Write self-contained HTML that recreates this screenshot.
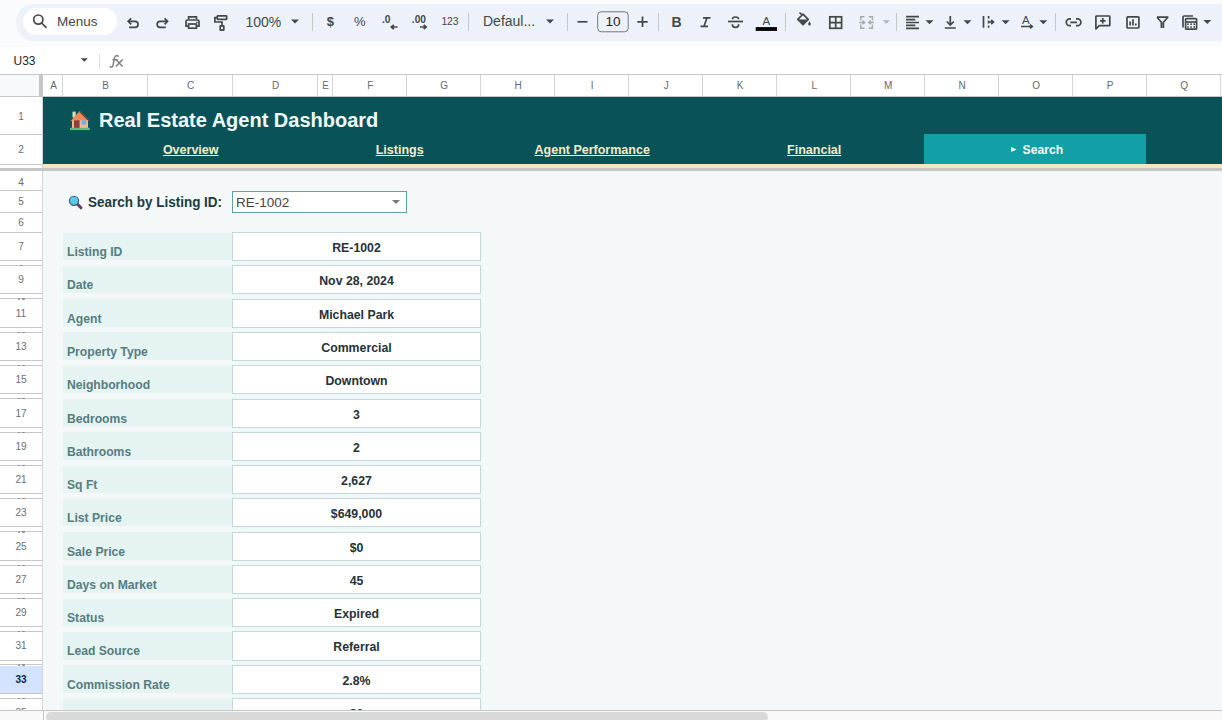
<!DOCTYPE html><html><head><meta charset="utf-8"><style>
*{margin:0;padding:0;box-sizing:border-box}
html,body{width:1222px;height:720px;overflow:hidden;background:#f9fbfd;font-family:"Liberation Sans",sans-serif}
body{position:relative}
.a{position:absolute}
.sep{position:absolute;top:13px;width:1px;height:18px;background:#c7c7c7}
.tt{position:absolute;color:#444746;white-space:nowrap}
.dd{position:absolute;width:0;height:0;border-left:4px solid transparent;border-right:4px solid transparent;border-top:4px solid #444746}
.ch{position:absolute;top:75.3px;height:21px;color:#65696c;font-size:10px;line-height:21px;text-align:center}
.vl{position:absolute;width:1px;background:#d3d5d4}
.hl{position:absolute;height:1px;background:#c4c7c5}
.rn{position:absolute;left:0;width:42px;color:#6a6e71;font-size:10px;text-align:center;overflow:hidden}
.lab{position:absolute;left:63px;width:169px;background:#e5f3f3;color:#557d80;font-weight:bold;font-size:12.8px}
.lab span{position:absolute;left:4px;top:0;line-height:14px;transform-origin:0 0;transform:scaleX(0.95)}
.val{position:absolute;left:232px;width:249px;background:#fff;border:1px solid #c5d7d8;color:#263238;font-weight:bold;font-size:12.3px;text-align:center}
.lnk{position:absolute;top:142px;color:#f3ecc8;font-weight:bold;font-size:12.5px;text-decoration:underline;text-align:center;line-height:16px}
</style></head><body>
<div class="a" style="left:16px;top:4px;width:1230px;height:36.5px;background:#edf2fa;border-radius:18px"></div>
<div class="a" style="left:23px;top:8px;width:94px;height:27px;background:#fff;border-radius:14px"></div>
<div class="tt" style="left:57px;top:14px;font-size:13.5px;line-height:16px">Menus</div>
<div class="tt" style="left:245.5px;top:14px;font-size:14px;line-height:16px">100%</div>
<div class="tt" style="left:483px;top:13px;font-size:14px;line-height:16px">Defaul...</div>
<div class="sep" style="left:312.0px"></div>
<div class="sep" style="left:468.0px"></div>
<div class="sep" style="left:567.0px"></div>
<div class="sep" style="left:658.0px"></div>
<div class="sep" style="left:785.0px"></div>
<div class="sep" style="left:896.0px"></div>
<div class="sep" style="left:1055.0px"></div>
<div class="a" style="left:0;top:46.5px;width:1222px;height:28px;background:#fff"></div>
<div class="tt" style="left:13.5px;top:54px;font-size:12px;line-height:15px;color:#1f1f1f">U33</div>
<div class="a" style="left:99px;top:54px;width:1px;height:15px;background:#dadce0"></div>
<svg class="a" style="left:0;top:0" width="1222" height="74" viewBox="0 0 1222 74"><circle cx="38.3" cy="19.6" r="4.6" fill="none" stroke="#444746" stroke-width="1.7"/>
<path d="M41.6 23 L46 27.4" fill="none" stroke="#444746" stroke-width="1.7" stroke-linecap="round"/>
<path d="M128.6 21.3 H135 A3.05 3.05 0 0 1 135 27.4 H129.1" fill="none" stroke="#444746" stroke-width="1.7" stroke-width="1.55"/>
<path d="M131.2 18.3 L128.2 21.3 L131.2 24.3" fill="none" stroke="#444746" stroke-width="1.7" stroke-width="1.55"/>
<path d="M167 21.3 H160.2 A3.05 3.05 0 0 0 160.2 27.4 H165.8" fill="none" stroke="#444746" stroke-width="1.7" stroke-width="1.55"/>
<path d="M164.6 18.3 L167.6 21.3 L164.6 24.3" fill="none" stroke="#444746" stroke-width="1.7" stroke-width="1.55"/>
<path d="M188.6 19.3 V16.8 H196.4 V19.3" fill="none" stroke="#444746" stroke-width="1.7"/>
<path d="M188.4 26.2 H186 V21.5 Q186 20 187.5 20 H197.5 Q199 20 199 21.5 V26.2 H196.6" fill="none" stroke="#444746" stroke-width="1.7"/>
<rect x="188.6" y="24" width="7.8" height="4.2" fill="none" stroke="#444746" stroke-width="1.7"/>
<circle cx="197" cy="22.3" r="0.8" fill="#444746"/>
<rect x="217.3" y="15.8" width="9.4" height="3.6" rx="0.6" fill="none" stroke="#444746" stroke-width="1.7"/>
<path d="M217.3 17.6 H214.9 V22 H222 V25.8" fill="none" stroke="#444746" stroke-width="1.7"/>
<rect x="220.2" y="25.8" width="3.6" height="4.4" rx="0.5" fill="none" stroke="#444746" stroke-width="1.7"/>
<path d="M291.0 19.5h8l-4.0 4.0z" fill="#444746"/>
<text x="330.3" y="25.5" font-family="Liberation Sans" font-weight="bold" font-size="13" fill="#444746" text-anchor="middle">$</text>
<text x="359.7" y="25.5" font-family="Liberation Sans" font-size="13" fill="#444746" text-anchor="middle">%</text>
<text x="382" y="22.8" font-family="Liberation Sans" font-weight="bold" font-size="10.2" fill="#444746">.0</text>
<path d="M397.5 27 H391.5 M393.8 24.8 L391.3 27 L393.8 29.2" fill="none" stroke="#444746" stroke-width="1.7" stroke-width="1.6"/>
<text x="411.8" y="22.8" font-family="Liberation Sans" font-weight="bold" font-size="10.2" fill="#444746">.00</text>
<path d="M420 27 H426 M423.7 24.8 L426.2 27 L423.7 29.2" fill="none" stroke="#444746" stroke-width="1.7" stroke-width="1.6"/>
<text x="441.4" y="24.6" font-family="Liberation Sans" font-size="10.3" fill="#444746">123</text>
<path d="M546.0 19.5h8l-4.0 4.0z" fill="#444746"/>
<path d="M577.5 21.8 H587.5" fill="none" stroke="#444746" stroke-width="1.7"/>
<rect x="597.7" y="11.8" width="30.5" height="20" rx="3.5" fill="none" stroke="#747775" stroke-width="1"/>
<text x="613" y="26.4" font-family="Liberation Sans" font-size="13.5" fill="#1f1f1f" text-anchor="middle">10</text>
<path d="M637.3 21.8 H647.7 M642.5 16.6 V27" fill="none" stroke="#444746" stroke-width="1.7"/>
<text x="676.5" y="27.1" font-family="Liberation Sans" font-weight="bold" font-size="14" fill="#444746" text-anchor="middle">B</text>
<path d="M703 17.8 H710.5 M700.5 26.3 H708 M707 17.8 L704 26.3" fill="none" stroke="#444746" stroke-width="1.7" stroke-width="1.9"/>
<path d="M728 21.5 H743" fill="none" stroke="#444746" stroke-width="1.7" stroke-width="1.5"/>
<path d="M738.5 19.3 Q738.5 17 735.5 17 Q732.5 17 732.5 19.3 M732.3 24.2 Q732.3 27.3 735.5 27.3 Q738.7 27.3 738.7 24.2" fill="none" stroke="#444746" stroke-width="1.7" stroke-width="1.6"/>
<text x="766.3" y="24.5" font-family="Liberation Sans" font-size="11.5" fill="#444746" text-anchor="middle">A</text>
<rect x="755.7" y="27.1" width="21.3" height="3.8" fill="#000"/>
<path d="M799.5 12.5 L802 15 M797.8 19.3 L803 14.2 L808.2 19.4 L803 24.6 Z" fill="none" stroke="#444746" stroke-width="1.7" stroke-linejoin="round"/>
<path d="M798.6 19.6 H807.4 L803 24 Z" fill="#444746"/>
<path d="M809.5 21.4 Q811.2 23.4 810.8 24.2 A1.3 1.3 0 0 1 808.2 24.2 Q807.8 23.4 809.5 21.4Z" fill="#444746"/>
<rect x="829.8" y="16.8" width="11.8" height="11.5" fill="none" stroke="#444746" stroke-width="1.7" stroke-width="1.5"/>
<path d="M835.7 16.8 V28.3 M829.8 22.55 H841.6" fill="none" stroke="#444746" stroke-width="1.7" stroke-width="1.5"/>
<path d="M864.5 16.8 H860.8 V20.3 M864.5 28.2 H860.8 V24.6 M868.7 16.8 H872.4 V20.3 M868.7 28.2 H872.4 V24.6 M859.3 22.4 H864.4 M862.6 20.5 L864.6 22.4 L862.6 24.3 M874 22.4 H868.9 M870.7 20.5 L868.7 22.4 L870.7 24.3" fill="none" stroke="#a8abaa" stroke-width="1.5"/>
<path d="M882.8 20.25h7l-3.5 3.5z" fill="#b0b3b2"/>
<path d="M906 16.6 H919 M906 19.6 H915.3 M906 22.5 H919 M906 25.4 H915.3 M906 28.3 H919" fill="none" stroke="#444746" stroke-width="1.7" stroke-width="1.5"/>
<path d="M925.5 20.2h8l-4.0 4.0z" fill="#444746"/>
<path d="M950.3 16 V25 M946.8 21.5 L950.3 25 L953.8 21.5 M944.8 28 H955.8" fill="none" stroke="#444746" stroke-width="1.7" stroke-width="1.7"/>
<path d="M963.5 20.2h8l-4.0 4.0z" fill="#444746"/>
<path d="M983.5 16 V27.8 M988.6 16 V18.5 M988.6 20.5 V23.5 M988.6 25.5 V27.8 M988.6 22 H993.2 M991.2 19.9 L993.5 22 L991.2 24.1" fill="none" stroke="#444746" stroke-width="1.7" stroke-width="1.7"/>
<path d="M1001.6 20.2h8l-4.0 4.0z" fill="#444746"/>
<text x="1025.8" y="24.2" font-family="Liberation Sans" font-size="11.5" fill="#444746" text-anchor="middle">A</text>
<path d="M1021 26.5 H1032 M1030 24.6 L1032.3 26.5 L1030 28.4" fill="none" stroke="#444746" stroke-width="1.7" stroke-width="1.5"/>
<path d="M1039.3 20.2h8l-4.0 4.0z" fill="#444746"/>
<path d="M1071 18.9 H1069.7 A3.4 3.4 0 0 0 1069.7 25.7 H1071 M1076 18.9 H1077.5 A3.4 3.4 0 0 1 1077.5 25.7 H1076 M1070.3 22.3 H1077" fill="none" stroke="#444746" stroke-width="1.7" stroke-width="1.8"/>
<path d="M1095.9 29 V16.5 Q1095.9 16 1096.5 16 H1109.3 Q1109.8 16 1109.8 16.5 V25.2 Q1109.8 25.7 1109.3 25.7 H1099.2 Z" fill="none" stroke="#444746" stroke-width="1.7" stroke-width="1.7" stroke-linejoin="round"/>
<path d="M1102.8 18 V23.6 M1100 20.8 H1105.6" fill="none" stroke="#444746" stroke-width="1.7" stroke-width="1.7"/>
<rect x="1127" y="16.8" width="11.9" height="11.2" rx="0.8" fill="none" stroke="#444746" stroke-width="1.7" stroke-width="1.6"/>
<path d="M1130.2 21.5 V25.6 M1133 19.2 V25.6 M1135.8 23.4 V25.6" fill="none" stroke="#444746" stroke-width="1.7" stroke-width="1.5"/>
<path d="M1157 17.2 H1167.8 L1163.4 22.3 V27.9 M1157 17.2 L1161.4 22.3 V27.9" fill="none" stroke="#444746" stroke-width="1.7" stroke-width="1.7" stroke-linejoin="round"/>
<path d="M1183 27.6 V17 Q1183 16 1184 16 H1193" fill="none" stroke="#444746" stroke-width="1.7" stroke-width="1.6"/>
<rect x="1185.6" y="18.6" width="11" height="10.6" rx="1" fill="none" stroke="#444746" stroke-width="1.7" stroke-width="1.6"/>
<path d="M1185.6 22 H1196.6" fill="none" stroke="#444746" stroke-width="1.7" stroke-width="1.6"/>
<rect x="1187.2" y="23.4" width="1.6" height="1.6" fill="#444746"/>
<rect x="1190.3" y="23.4" width="1.6" height="1.6" fill="#444746"/>
<rect x="1193.4" y="23.4" width="1.6" height="1.6" fill="#444746"/>
<rect x="1187.2" y="26.2" width="1.6" height="1.6" fill="#444746"/>
<rect x="1190.3" y="26.2" width="1.6" height="1.6" fill="#444746"/>
<rect x="1193.4" y="26.2" width="1.6" height="1.6" fill="#444746"/>
<path d="M1203.3 20.0h8l-4.0 4.0z" fill="#444746"/>
<path d="M118.2 56.3 Q117 55 115.6 56 Q114.6 56.8 114.3 58.5 L113.1 65.2 Q112.7 67.3 111 67.2 Q110.4 67.1 110.2 66.6" fill="none" stroke="#7b7e80" stroke-width="1.45" stroke-linecap="round"/>
<path d="M112.3 59.6 H117.6" fill="none" stroke="#7b7e80" stroke-width="1.3"/>
<path d="M115.9 59.4 L122.6 66.4 M122.6 59.4 L115.9 66.4" fill="none" stroke="#7b7e80" stroke-width="1.5"/>
<path d="M80.8 58.25h7l-3.5 3.5z" fill="#444746"/></svg>
<div class="a" style="left:0;top:74px;width:1222px;height:23px;background:#fff"></div>
<div class="a" style="left:0;top:75px;width:39px;height:21px;background:#f8f9fa"></div>
<div class="hl" style="left:0;top:74px;width:1222px"></div>
<div class="hl" style="left:0;top:96px;width:1222px"></div>
<div class="a" style="left:39px;top:75px;width:4px;height:22px;background:#c4c7c5"></div>
<div class="ch" style="left:44.2px;width:19px">A</div>
<div class="vl" style="left:62px;top:75px;height:21px"></div>
<div class="ch" style="left:63.2px;width:85px">B</div>
<div class="vl" style="left:147px;top:75px;height:21px"></div>
<div class="ch" style="left:148.2px;width:85px">C</div>
<div class="vl" style="left:232px;top:75px;height:21px"></div>
<div class="ch" style="left:233.2px;width:85px">D</div>
<div class="vl" style="left:317px;top:75px;height:21px"></div>
<div class="ch" style="left:318.2px;width:15px">E</div>
<div class="vl" style="left:332px;top:75px;height:21px"></div>
<div class="ch" style="left:333.2px;width:74px">F</div>
<div class="vl" style="left:406px;top:75px;height:21px"></div>
<div class="ch" style="left:407.2px;width:74px">G</div>
<div class="vl" style="left:480px;top:75px;height:21px"></div>
<div class="ch" style="left:481.2px;width:74px">H</div>
<div class="vl" style="left:554px;top:75px;height:21px"></div>
<div class="ch" style="left:555.2px;width:74px">I</div>
<div class="vl" style="left:628px;top:75px;height:21px"></div>
<div class="ch" style="left:629.2px;width:74px">J</div>
<div class="vl" style="left:702px;top:75px;height:21px"></div>
<div class="ch" style="left:703.2px;width:74px">K</div>
<div class="vl" style="left:776px;top:75px;height:21px"></div>
<div class="ch" style="left:777.2px;width:74px">L</div>
<div class="vl" style="left:850px;top:75px;height:21px"></div>
<div class="ch" style="left:851.2px;width:74px">M</div>
<div class="vl" style="left:924px;top:75px;height:21px"></div>
<div class="ch" style="left:925.2px;width:74px">N</div>
<div class="vl" style="left:998px;top:75px;height:21px"></div>
<div class="ch" style="left:999.2px;width:74px">O</div>
<div class="vl" style="left:1072px;top:75px;height:21px"></div>
<div class="ch" style="left:1073.2px;width:74px">P</div>
<div class="vl" style="left:1146px;top:75px;height:21px"></div>
<div class="ch" style="left:1147.2px;width:74px">Q</div>
<div class="vl" style="left:1220px;top:75px;height:21px"></div>
<div class="a" style="left:0;top:97px;width:43px;height:613px;background:#fff"></div>
<div class="vl" style="left:42px;top:97px;height:613px"></div>
<div class="hl" style="left:0;top:164px;width:42px"></div>
<div class="rn" style="top:99px;height:36.599999999999994px;line-height:36.599999999999994px;">1</div>
<div class="hl" style="left:0;top:133.6px;width:42px"></div>
<div class="rn" style="top:134.6px;height:29.400000000000006px;line-height:29.400000000000006px;">2</div>
<div class="hl" style="left:0;top:164px;width:42px"></div>
<div class="rn" style="top:172.5px;height:19.19999999999999px;line-height:19.19999999999999px;">4</div>
<div class="hl" style="left:0;top:190.2px;width:42px"></div>
<div class="rn" style="top:191.7px;height:20.900000000000006px;line-height:20.900000000000006px;">5</div>
<div class="hl" style="left:0;top:212.1px;width:42px"></div>
<div class="rn" style="top:213.1px;height:19.0px;line-height:19.0px;">6</div>
<div class="hl" style="left:0;top:232.1px;width:42px"></div>
<div class="rn" style="top:233.1px;height:27.099999999999994px;line-height:27.099999999999994px;">7</div>
<div class="hl" style="left:0;top:260.2px;width:42px"></div>
<div class="hl" style="left:0;top:265.1px;width:42px"></div>
<div class="a" style="left:20px;top:265.1px;width:2.6px;height:1.2px;background:#8a8d8f;border-radius:1px"></div>
<div class="rn" style="top:266.38px;height:27.100000000000023px;line-height:27.100000000000023px;">9</div>
<div class="hl" style="left:0;top:293.48px;width:42px"></div>
<div class="hl" style="left:0;top:298.38px;width:42px"></div>
<div class="a" style="left:17.5px;top:298.38px;width:2.6px;height:1.2px;background:#8a8d8f;border-radius:1px"></div>
<div class="a" style="left:22px;top:298.38px;width:2.6px;height:1.2px;background:#8a8d8f;border-radius:1px"></div>
<div class="rn" style="top:299.65999999999997px;height:27.100000000000023px;line-height:27.100000000000023px;">11</div>
<div class="hl" style="left:0;top:326.76px;width:42px"></div>
<div class="hl" style="left:0;top:331.66px;width:42px"></div>
<div class="a" style="left:17.5px;top:331.66px;width:2.6px;height:1.2px;background:#8a8d8f;border-radius:1px"></div>
<div class="a" style="left:22px;top:331.66px;width:2.6px;height:1.2px;background:#8a8d8f;border-radius:1px"></div>
<div class="rn" style="top:332.94px;height:27.099999999999966px;line-height:27.099999999999966px;">13</div>
<div class="hl" style="left:0;top:360.03999999999996px;width:42px"></div>
<div class="hl" style="left:0;top:364.94000000000005px;width:42px"></div>
<div class="a" style="left:17.5px;top:364.94000000000005px;width:2.6px;height:1.2px;background:#8a8d8f;border-radius:1px"></div>
<div class="a" style="left:22px;top:364.94000000000005px;width:2.6px;height:1.2px;background:#8a8d8f;border-radius:1px"></div>
<div class="rn" style="top:366.22px;height:27.099999999999966px;line-height:27.099999999999966px;">15</div>
<div class="hl" style="left:0;top:393.32px;width:42px"></div>
<div class="hl" style="left:0;top:398.22px;width:42px"></div>
<div class="a" style="left:17.5px;top:398.22px;width:2.6px;height:1.2px;background:#8a8d8f;border-radius:1px"></div>
<div class="a" style="left:22px;top:398.22px;width:2.6px;height:1.2px;background:#8a8d8f;border-radius:1px"></div>
<div class="rn" style="top:399.5px;height:27.100000000000023px;line-height:27.100000000000023px;">17</div>
<div class="hl" style="left:0;top:426.6px;width:42px"></div>
<div class="hl" style="left:0;top:431.5px;width:42px"></div>
<div class="a" style="left:17.5px;top:431.5px;width:2.6px;height:1.2px;background:#8a8d8f;border-radius:1px"></div>
<div class="a" style="left:22px;top:431.5px;width:2.6px;height:1.2px;background:#8a8d8f;border-radius:1px"></div>
<div class="rn" style="top:432.78px;height:27.100000000000023px;line-height:27.100000000000023px;">19</div>
<div class="hl" style="left:0;top:459.88px;width:42px"></div>
<div class="hl" style="left:0;top:464.78000000000003px;width:42px"></div>
<div class="a" style="left:17.5px;top:464.78000000000003px;width:2.6px;height:1.2px;background:#8a8d8f;border-radius:1px"></div>
<div class="a" style="left:22px;top:464.78000000000003px;width:2.6px;height:1.2px;background:#8a8d8f;border-radius:1px"></div>
<div class="rn" style="top:466.06px;height:27.099999999999966px;line-height:27.099999999999966px;">21</div>
<div class="hl" style="left:0;top:493.15999999999997px;width:42px"></div>
<div class="hl" style="left:0;top:498.06000000000006px;width:42px"></div>
<div class="a" style="left:17.5px;top:498.06000000000006px;width:2.6px;height:1.2px;background:#8a8d8f;border-radius:1px"></div>
<div class="a" style="left:22px;top:498.06000000000006px;width:2.6px;height:1.2px;background:#8a8d8f;border-radius:1px"></div>
<div class="rn" style="top:499.34000000000003px;height:27.100000000000023px;line-height:27.100000000000023px;">23</div>
<div class="hl" style="left:0;top:526.44px;width:42px"></div>
<div class="hl" style="left:0;top:531.34px;width:42px"></div>
<div class="a" style="left:17.5px;top:531.34px;width:2.6px;height:1.2px;background:#8a8d8f;border-radius:1px"></div>
<div class="a" style="left:22px;top:531.34px;width:2.6px;height:1.2px;background:#8a8d8f;border-radius:1px"></div>
<div class="rn" style="top:532.62px;height:27.100000000000023px;line-height:27.100000000000023px;">25</div>
<div class="hl" style="left:0;top:559.72px;width:42px"></div>
<div class="hl" style="left:0;top:564.62px;width:42px"></div>
<div class="a" style="left:17.5px;top:564.62px;width:2.6px;height:1.2px;background:#8a8d8f;border-radius:1px"></div>
<div class="a" style="left:22px;top:564.62px;width:2.6px;height:1.2px;background:#8a8d8f;border-radius:1px"></div>
<div class="rn" style="top:565.9px;height:27.100000000000023px;line-height:27.100000000000023px;">27</div>
<div class="hl" style="left:0;top:593.0px;width:42px"></div>
<div class="hl" style="left:0;top:597.9000000000001px;width:42px"></div>
<div class="a" style="left:17.5px;top:597.9000000000001px;width:2.6px;height:1.2px;background:#8a8d8f;border-radius:1px"></div>
<div class="a" style="left:22px;top:597.9000000000001px;width:2.6px;height:1.2px;background:#8a8d8f;border-radius:1px"></div>
<div class="rn" style="top:599.1800000000001px;height:27.09999999999991px;line-height:27.09999999999991px;">29</div>
<div class="hl" style="left:0;top:626.28px;width:42px"></div>
<div class="hl" style="left:0;top:631.1800000000001px;width:42px"></div>
<div class="a" style="left:17.5px;top:631.1800000000001px;width:2.6px;height:1.2px;background:#8a8d8f;border-radius:1px"></div>
<div class="a" style="left:22px;top:631.1800000000001px;width:2.6px;height:1.2px;background:#8a8d8f;border-radius:1px"></div>
<div class="rn" style="top:632.46px;height:27.09999999999991px;line-height:27.09999999999991px;">31</div>
<div class="hl" style="left:0;top:659.56px;width:42px"></div>
<div class="hl" style="left:0;top:664.46px;width:42px"></div>
<div class="a" style="left:17.5px;top:664.46px;width:2.6px;height:1.2px;background:#8a8d8f;border-radius:1px"></div>
<div class="a" style="left:22px;top:664.46px;width:2.6px;height:1.2px;background:#8a8d8f;border-radius:1px"></div>
<div class="a" style="left:0;top:665.74px;width:42px;height:27.09999999999991px;background:#d3e3fd"></div>
<div class="rn" style="top:665.74px;height:27.09999999999991px;line-height:27.09999999999991px;color:#0b1f4d;font-weight:bold;">33</div>
<div class="hl" style="left:0;top:692.8399999999999px;width:42px"></div>
<div class="hl" style="left:0;top:697.74px;width:42px"></div>
<div class="a" style="left:17.5px;top:697.74px;width:2.6px;height:1.2px;background:#8a8d8f;border-radius:1px"></div>
<div class="a" style="left:22px;top:697.74px;width:2.6px;height:1.2px;background:#8a8d8f;border-radius:1px"></div>
<div class="rn" style="top:699px;height:28px;line-height:28px">35</div>
<div class="a" style="left:43px;top:97px;width:1179px;height:613px;background:#f4f8f9"></div>
<div class="a" style="left:43px;top:97px;width:1179px;height:67px;background:#095258"></div>
<div class="a" style="left:43px;top:164px;width:1179px;height:4px;background:#f1e6c6"></div>
<div class="a" style="left:0;top:167.6px;width:1222px;height:3.8px;background:#c8c6c4"></div>
<div class="a" style="left:924px;top:134px;width:222px;height:30px;background:#12a0a6"></div>
<svg class="a" style="left:0;top:0" width="100" height="140" viewBox="0 0 100 140"><rect x="72.5" y="111.6" width="3.2" height="6" fill="#cfe3c0"/><path d="M70.6 121 L79.7 111 L89.6 121 Z" fill="#ef8a5c"/><path d="M79.7 111 L89.6 121 L88.2 121 L79.7 112.6 Z" fill="#7a3d30"/><rect x="72" y="120.5" width="16" height="7.6" fill="#f2b696"/><rect x="74" y="120.3" width="5.6" height="7.8" fill="#8e3f3a"/><rect x="81.7" y="120.3" width="4.4" height="4.2" fill="#6aaee0"/><rect x="70" y="127.8" width="19.8" height="2.3" fill="#5fba7d"/></svg>
<div class="tt" style="left:99px;top:108px;font-size:20px;line-height:24px;color:#f0fbfa;font-weight:bold">Real Estate Agent Dashboard</div>
<div class="lnk" style="left:63.2px;width:255px">Overview</div>
<div class="lnk" style="left:318.2px;width:163px">Listings</div>
<div class="lnk" style="left:481.2px;width:222px">Agent Performance</div>
<div class="lnk" style="left:703.2px;width:222px">Financial</div>
<svg class="a" style="left:1005px;top:140px" width="20" height="20" viewBox="1005 140 20 20"><path d="M1011 147 L1016.6 149.5 L1011 152 Z" fill="#e8fafa"/></svg>
<div class="tt" style="left:1022.5px;top:141.5px;font-size:12.2px;line-height:16px;color:#f2fcfc;font-weight:bold">Search</div>
<svg class="a" style="left:60px;top:190px" width="30" height="22" viewBox="60 190 30 22"><path d="M77.6 204.4 L81 207.8" stroke="#6d3b6e" stroke-width="3" stroke-linecap="round"/><circle cx="74" cy="200.8" r="4.6" fill="#5cc6ec" stroke="#2d5e6c" stroke-width="1.1"/></svg>
<div class="tt" style="left:88px;top:194px;font-size:14px;line-height:16px;color:#1f3a3d;font-weight:bold;transform-origin:0 0;transform:scaleX(0.963)">Search by Listing ID:</div>
<div class="a" style="left:232px;top:191px;width:175px;height:22px;background:#fff;border:1px solid #5fa3a8"></div>
<div class="tt" style="left:236px;top:195px;font-size:13.5px;line-height:15px;color:#444">RE-1002</div>
<div class="dd" style="left:392px;top:200px;border-top-color:#777;border-left-width:4px;border-right-width:4px"></div>
<div class="a" style="left:232px;top:233px;width:251px;height:477px;background:#eef8f9"></div>
<div class="lab" style="top:232.6px;height:27.6px"><span style="top:12.5px">Listing ID</span></div>
<div class="val" style="top:232.1px;height:29.1px;line-height:27.1px"><span style="position:relative;top:2px">RE-1002</span></div>
<div class="lab" style="top:265.88px;height:27.6px"><span style="top:12.5px">Date</span></div>
<div class="val" style="top:265.38px;height:29.1px;line-height:27.1px"><span style="position:relative;top:2px">Nov 28, 2024</span></div>
<div class="lab" style="top:299.15999999999997px;height:27.6px"><span style="top:12.5px">Agent</span></div>
<div class="val" style="top:298.65999999999997px;height:29.1px;line-height:27.1px"><span style="position:relative;top:2px">Michael Park</span></div>
<div class="lab" style="top:332.44px;height:27.6px"><span style="top:12.5px">Property Type</span></div>
<div class="val" style="top:331.94px;height:29.1px;line-height:27.1px"><span style="position:relative;top:2px">Commercial</span></div>
<div class="lab" style="top:365.72px;height:27.6px"><span style="top:12.5px">Neighborhood</span></div>
<div class="val" style="top:365.22px;height:29.1px;line-height:27.1px"><span style="position:relative;top:2px">Downtown</span></div>
<div class="lab" style="top:399.0px;height:27.6px"><span style="top:12.5px">Bedrooms</span></div>
<div class="val" style="top:398.5px;height:29.1px;line-height:27.1px"><span style="position:relative;top:2px">3</span></div>
<div class="lab" style="top:432.28px;height:27.6px"><span style="top:12.5px">Bathrooms</span></div>
<div class="val" style="top:431.78px;height:29.1px;line-height:27.1px"><span style="position:relative;top:2px">2</span></div>
<div class="lab" style="top:465.56px;height:27.6px"><span style="top:12.5px">Sq Ft</span></div>
<div class="val" style="top:465.06px;height:29.1px;line-height:27.1px"><span style="position:relative;top:2px">2,627</span></div>
<div class="lab" style="top:498.84000000000003px;height:27.6px"><span style="top:12.5px">List Price</span></div>
<div class="val" style="top:498.34000000000003px;height:29.1px;line-height:27.1px"><span style="position:relative;top:2px">$649,000</span></div>
<div class="lab" style="top:532.12px;height:27.6px"><span style="top:12.5px">Sale Price</span></div>
<div class="val" style="top:531.62px;height:29.1px;line-height:27.1px"><span style="position:relative;top:2px">$0</span></div>
<div class="lab" style="top:565.4px;height:27.6px"><span style="top:12.5px">Days on Market</span></div>
<div class="val" style="top:564.9px;height:29.1px;line-height:27.1px"><span style="position:relative;top:2px">45</span></div>
<div class="lab" style="top:598.6800000000001px;height:27.6px"><span style="top:12.5px">Status</span></div>
<div class="val" style="top:598.1800000000001px;height:29.1px;line-height:27.1px"><span style="position:relative;top:2px">Expired</span></div>
<div class="lab" style="top:631.96px;height:27.6px"><span style="top:12.5px">Lead Source</span></div>
<div class="val" style="top:631.46px;height:29.1px;line-height:27.1px"><span style="position:relative;top:2px">Referral</span></div>
<div class="lab" style="top:665.24px;height:27.6px"><span style="top:12.5px">Commission Rate</span></div>
<div class="val" style="top:664.74px;height:29.1px;line-height:27.1px"><span style="position:relative;top:2px">2.8%</span></div>
<div class="lab" style="top:698.52px;height:27.6px"><span style="top:12.5px">Commission</span></div>
<div class="val" style="top:698.02px;height:29.1px;line-height:27.1px"><span style="position:relative;top:2px">$0</span></div>
<div class="a" style="left:0;top:710px;width:1222px;height:10px;background:#f9f9f9;border-top:1px solid #c4c7c5"></div>
<div class="vl" style="left:43px;top:710px;height:10px;background:#c4c7c5"></div>
<div class="a" style="left:45.5px;top:712px;width:722px;height:10px;background:#d9d9d9;border-radius:5px"></div>
</body></html>
